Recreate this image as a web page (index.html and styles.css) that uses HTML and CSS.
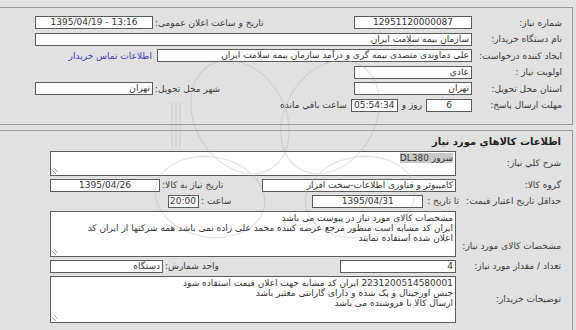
FILE: index.html
```html
<!DOCTYPE html>
<html lang="fa" dir="rtl">
<head>
    <meta charset="UTF-8">
    <title>جزئیات نیاز</title>
    <link rel="stylesheet" href="styles.css">
</head>
<body>
    <div class="page">
        <!-- مشخصات کلی نیاز -->
        <div class="panel top">
            <div class="row">
                <span class="lbl">شماره نیاز:</span>
                <div class="fields">
                    <span class="box w118 center">12951120000087</span>
                    <div class="pair">
                        <span class="lbl2">تاریخ و ساعت اعلان عمومی:</span>
                        <span class="box w118 center ltr">1395/04/19 - 13:16</span>
                    </div>
                </div>
            </div>
            <div class="row">
                <span class="lbl">نام دستگاه خریدار:</span>
                <div class="fields">
                    <span class="box full">سازمان بیمه سلامت ایران</span>
                </div>
            </div>
            <div class="row">
                <span class="lbl">ایجاد کننده درخواست:</span>
                <div class="fields">
                    <span class="box w315">علی دماوندی متصدی بیمه گری و درآمد سازمان بیمه سلامت ایران</span>
                    <a href="#" class="link">اطلاعات تماس خریدار</a>
                </div>
            </div>
            <div class="row">
                <span class="lbl">اولویت نیاز :</span>
                <div class="fields">
                    <span class="box w118">عادي</span>
                </div>
            </div>
            <div class="row">
                <span class="lbl">استان محل تحویل:</span>
                <div class="fields">
                    <span class="box w118">تهران</span>
                    <div class="pair">
                        <span class="lbl2">شهر محل تحویل:</span>
                        <span class="box w118">تهران</span>
                    </div>
                </div>
            </div>
            <div class="row">
                <span class="lbl">مهلت ارسال پاسخ:</span>
                <div class="fields">
                    <span class="box w46 center">6</span>
                    <span class="unit">روز و</span>
                    <span class="box w47 center">05:54:34</span>
                    <span class="unit">ساعت باقي مانده</span>
                </div>
            </div>
        </div>

        <!-- کالاها -->
        <div class="panel goods">
            <h2 class="title">اطلاعات کالاهاي مورد نياز</h2>
            <div class="row tall">
                <span class="lbl">شرح کلي نياز:</span>
                <div class="fields">
                    <div class="area h25"><span class="sel">سرور DL380</span></div>
                </div>
            </div>
            <div class="row">
                <span class="lbl">گروه کالا:</span>
                <div class="fields">
                    <span class="box w194">کامپیوتر و فناوری اطلاعات-سخت افزار</span>
                    <div class="pair">
                        <span class="lbl2">تاریخ نیاز به کالا:</span>
                        <span class="box w110 center">1395/04/26</span>
                    </div>
                </div>
            </div>
            <div class="row">
                <span class="lbl wide">حداقل تاریخ اعتبار قیمت:</span>
                <div class="fields narrow">
                    <span class="unit">تا تاریخ :</span>
                    <span class="box w111 center">1395/04/31</span>
                    <div class="pair">
                        <span class="lbl2">ساعت :</span>
                        <span class="box w31 center">20:00</span>
                    </div>
                </div>
            </div>
            <div class="row tall r-spec">
                <span class="lbl">مشخصات کالای مورد نیاز:</span>
                <div class="fields">
                    <div class="area h46">مشخصات کالای مورد نیاز در پیوست می باشد<br>ایران کد مشابه است منظور مرجع عرضه کننده محمد علی زاده نمی باشد همه شرکتها از ایران کد<br>اعلان شده استفاده نمایند</div>
                </div>
            </div>
            <div class="row">
                <span class="lbl">تعداد / مقدار مورد نیاز:</span>
                <div class="fields">
                    <span class="box w116">4</span>
                    <div class="pair">
                        <span class="lbl2">واحد شمارش:</span>
                        <span class="box w113">دستگاه</span>
                    </div>
                </div>
            </div>
            <div class="row tall">
                <span class="lbl">توضیحات خریدار:</span>
                <div class="fields">
                    <div class="area h47">2231200514580001 ایران کد مشابه جهت اعلان قیمت استفاده شود<br>جنس اورجینال و پک شده و دارای گارانتی معتبر باشد<br>ارسال کالا با فروشنده می باشد</div>
                </div>
            </div>
        </div>

        <!-- واترمارک کمرنگ -->
        <div class="watermark">
            <svg width="576" height="330" viewBox="0 0 576 330">
                <g fill="none" stroke="#9c9c9c" stroke-width="1">
                    <ellipse cx="240" cy="110" rx="45" ry="60" transform="rotate(-30 240 110)"/>
                    <ellipse cx="330" cy="110" rx="45" ry="60" transform="rotate(30 330 110)"/>
                    <ellipse cx="210" cy="190" rx="40" ry="55" transform="rotate(-80 210 190)"/>
                    <ellipse cx="360" cy="190" rx="40" ry="55" transform="rotate(80 360 190)"/>
                    <line x1="172" y1="95" x2="172" y2="140"/>
                    <line x1="176" y1="95" x2="176" y2="140"/>
                    <line x1="180" y1="95" x2="180" y2="140"/>
                </g>
            </svg>
        </div>
    </div>
</body>
</html>
```

FILE: styles.css
```css
* {
    margin: 0;
    padding: 0;
    box-sizing: border-box;
}

body {
    background: #e1e1e1;
    font-family: 'DejaVu Sans', sans-serif;
    font-size: 9px;
    color: #3a3a3a;
    width: 576px;
    height: 330px;
    overflow: hidden;
}

.page {
    position: relative;
    width: 576px;
    height: 330px;
}

.panel {
    border: 1px solid #999;
    border-left: none;
    margin-right: 3px;
}

.panel.top {
    margin-top: 7px;
    padding: 8px 0 8px;
}

.panel.goods {
    margin-top: 5px;
    padding: 3px 0 8px;
}

.title {
    font-size: 10px;
    font-weight: bold;
    color: #222;
    padding-right: 11px;
    height: 16px;
    line-height: 16px;
    margin-bottom: 1px;
}

.row {
    display: flex;
    align-items: center;
    height: 13px;
    margin-bottom: 3.6px;
}

.goods .row {
    margin-bottom: 3px;
}

.row.tall {
    height: auto;
}

.lbl {
    width: 100px;
    padding-right: 10px;
    white-space: nowrap;
    flex-shrink: 0;
}

.goods .lbl {
    width: 116px;
    padding-right: 11px;
}

.goods .lbl.wide {
    width: auto;
    padding-left: 3px;
}

.fields {
    width: 437px;
    display: flex;
    align-items: center;
}

.goods .fields {
    width: 406px;
}

.goods .fields.narrow {
    width: auto;
    flex: 1;
    margin-left: 168px;
}

.pair {
    display: flex;
    align-items: center;
    margin-right: auto;
}

.lbl2 {
    padding-left: 2px;
    white-space: nowrap;
}

.unit {
    padding: 0 4px;
    white-space: nowrap;
}

.box {
    display: block;
    height: 13px;
    line-height: 11px;
    background: #fff;
    border: 1px solid #5c5c5c;
    padding: 0 2px;
    color: #333;
    white-space: nowrap;
    overflow: hidden;
    flex-shrink: 0;
}

.center { text-align: center; }

.ltr {
    direction: ltr;
}

.full { width: 437px; }
.w315 { width: 315px; }
.w194 { width: 194px; }
.w118 { width: 118px; }
.w116 { width: 116px; }
.w113 { width: 113px; }
.w111 { width: 111px; }
.w110 { width: 110px; }
.w47 { width: 47px; }
.w46 { width: 46px; }
.w31 { width: 31px; }

.link {
    color: #3b3bbf;
    text-decoration: none;
    padding-right: 5px;
    white-space: nowrap;
}

.area {
    position: relative;
    width: 406px;
    background: #fff;
    border: 1px solid #5c5c5c;
    padding: 1px 2px;
    line-height: 10px;
    color: #333;
    white-space: nowrap;
    overflow: hidden;
}

.area::after {
    content: "";
    position: absolute;
    left: 1px;
    bottom: 1px;
    width: 6px;
    height: 6px;
    background: linear-gradient(45deg, transparent 30%, #aaa 30%, #aaa 40%, transparent 40%, transparent 60%, #aaa 60%, #aaa 70%, transparent 70%);
}

.h25 { height: 25px; }
.h46 { height: 46px; }
.h47 { height: 47px; }

.sel {
    background: #c9c9c9;
}

.r-spec .lbl {
    align-self: flex-end;
    padding-bottom: 6px;
}

.watermark {
    position: absolute;
    top: 0;
    left: 0;
    width: 576px;
    height: 330px;
    pointer-events: none;
    opacity: 0.3;
}

.watermark svg {
    position: absolute;
    top: 0;
    left: 0;
}
```
